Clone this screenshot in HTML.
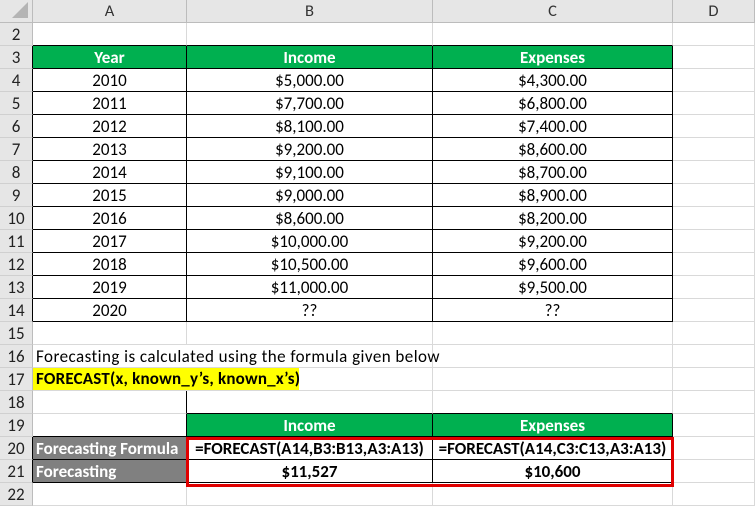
<!DOCTYPE html>
<html><head><meta charset="utf-8"><style>
body{margin:0;width:755px;height:505px;overflow:hidden;background:#fff;position:relative;font-family:Calibri,Carlito,"Liberation Sans",sans-serif;font-size:17px}
table{border-collapse:separate;border-spacing:0;table-layout:fixed;position:absolute;left:0;top:0;width:755px}
td{height:23px;padding:0 3px;border-right:1px solid #d9d9d9;border-bottom:1px solid #d9d9d9;white-space:nowrap;overflow:visible;color:#000;box-sizing:border-box;line-height:21px}
td.h{background:#e6e6e6;color:#333;text-align:center;border-right:1px solid #bcbcbc;border-bottom:1px solid #bcbcbc;padding:0;font-size:16.5px}
td.rh{background:#e6e6e6;color:#222;text-align:center;border-right:1px solid #bcbcbc;border-bottom:1px solid #d0d0d0;padding:0;font-size:17px}
.c{text-align:center}
.g{background:#00b050;color:#fff;font-weight:bold;text-align:center}
.gr{background:#808080;color:#fff;font-weight:bold}
.br{border-right:1px solid #000!important}
.bb{border-bottom:1px solid #000!important}
.b{font-weight:bold}
</style></head><body>
<table>
<colgroup><col style="width:33px"><col style="width:154px"><col style="width:246px"><col style="width:240px"><col style="width:82px"></colgroup>
<tr><td class="h" style="position:relative"><svg width="20" height="20" style="position:absolute;right:2px;bottom:2px"><polygon points="18,2 18,18 2,18" fill="#b4b4b4"/></svg></td><td class="h">A</td><td class="h">B</td><td class="h">C</td><td class="h">D</td></tr>
<tr><td class="rh">2</td><td class="bb"></td><td class="bb"></td><td class="bb"></td><td></td></tr>
<tr><td class="rh br">3</td><td class="g br bb">Year</td><td class="g br bb">Income</td><td class="g br bb">Expenses</td><td></td></tr>
<tr><td class="rh br">4</td><td class="c br bb">2010</td><td class="c br bb">$5,000.00</td><td class="c br bb">$4,300.00</td><td></td></tr>
<tr><td class="rh br">5</td><td class="c br bb">2011</td><td class="c br bb">$7,700.00</td><td class="c br bb">$6,800.00</td><td></td></tr>
<tr><td class="rh br">6</td><td class="c br bb">2012</td><td class="c br bb">$8,100.00</td><td class="c br bb">$7,400.00</td><td></td></tr>
<tr><td class="rh br">7</td><td class="c br bb">2013</td><td class="c br bb">$9,200.00</td><td class="c br bb">$8,600.00</td><td></td></tr>
<tr><td class="rh br">8</td><td class="c br bb">2014</td><td class="c br bb">$9,100.00</td><td class="c br bb">$8,700.00</td><td></td></tr>
<tr><td class="rh br">9</td><td class="c br bb">2015</td><td class="c br bb">$9,000.00</td><td class="c br bb">$8,900.00</td><td></td></tr>
<tr><td class="rh br">10</td><td class="c br bb">2016</td><td class="c br bb">$8,600.00</td><td class="c br bb">$8,200.00</td><td></td></tr>
<tr><td class="rh br">11</td><td class="c br bb">2017</td><td class="c br bb">$10,000.00</td><td class="c br bb">$9,200.00</td><td></td></tr>
<tr><td class="rh br">12</td><td class="c br bb">2018</td><td class="c br bb">$10,500.00</td><td class="c br bb">$9,600.00</td><td></td></tr>
<tr><td class="rh br">13</td><td class="c br bb">2019</td><td class="c br bb">$11,000.00</td><td class="c br bb">$9,500.00</td><td></td></tr>
<tr><td class="rh br">14</td><td class="c br bb">2020</td><td class="c br bb">??</td><td class="c br bb">??</td><td></td></tr>
<tr><td class="rh">15</td><td></td><td></td><td></td><td></td></tr>
<tr><td class="rh">16</td><td style="border-right:none;letter-spacing:0.45px">Forecasting is calculated using the formula given below</td><td></td><td></td><td></td></tr>
<tr><td class="rh">17</td><td style="padding:0;border-right:none"><span style="display:inline-block;background:#ffff00;font-weight:bold;width:266px;height:22px;line-height:22px;padding-left:3px;box-sizing:border-box;letter-spacing:0.2px">FORECAST(x, known_y’s, known_x’s)</span></td><td></td><td></td><td></td></tr>
<tr><td class="rh">18</td><td class="br"></td><td class="bb"></td><td class="bb"></td><td></td></tr>
<tr><td class="rh">19</td><td class="br bb"></td><td class="g br bb">Income</td><td class="g br bb">Expenses</td><td></td></tr>
<tr><td class="rh br">20</td><td class="gr br bb">Forecasting Formula</td><td class="c b br bb">=FORECAST(A14,B3:B13,A3:A13)</td><td class="c b br bb">=FORECAST(A14,C3:C13,A3:A13)</td><td></td></tr>
<tr><td class="rh br">21</td><td class="gr br bb">Forecasting</td><td class="c b br bb">$11,527</td><td class="c b br bb">$10,600</td><td></td></tr>
<tr><td class="rh">22</td><td></td><td></td><td></td><td></td></tr>
</table>
<div style="position:absolute;left:186px;top:437px;width:482px;height:44px;border:3px solid #e00000"></div>
</body></html>
